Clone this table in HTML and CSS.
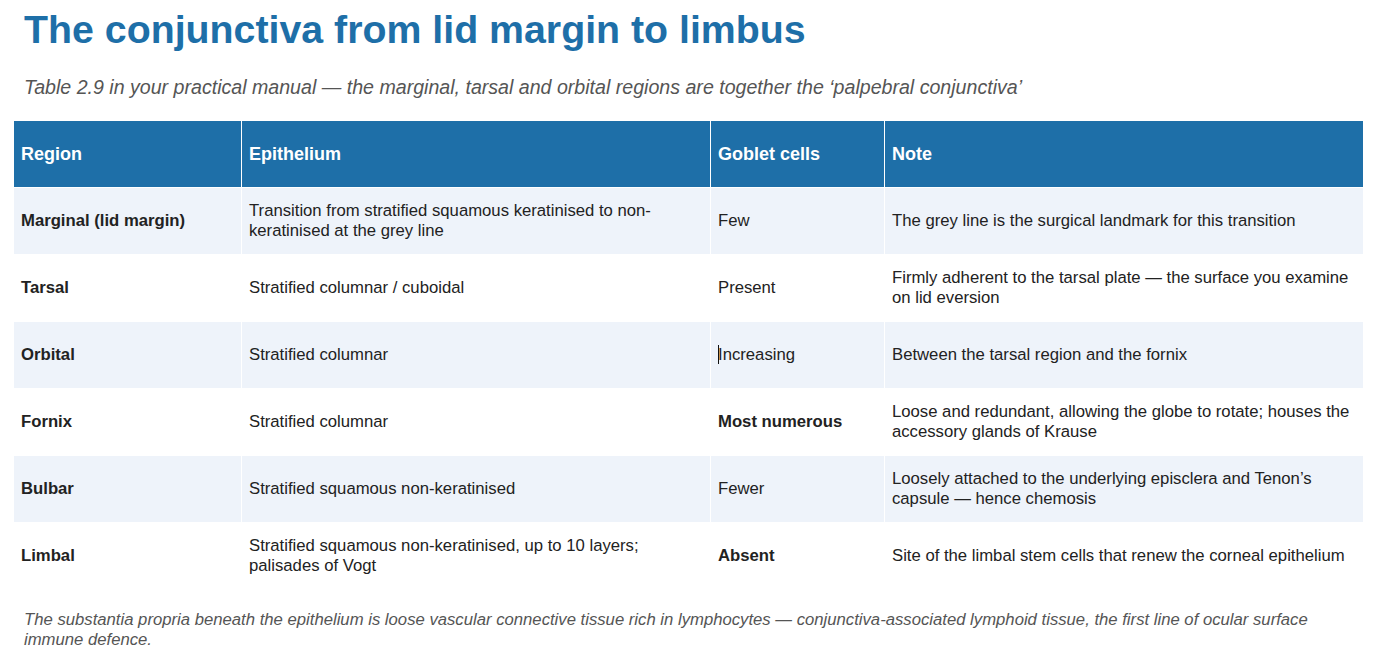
FILE: index.html
```html
<!DOCTYPE html>
<html lang="en">
<head>
<meta charset="utf-8">
<title>The conjunctiva from lid margin to limbus</title>
<link rel="stylesheet" href="styles.css">
</head>
<body>
<main class="page">
  <h1 class="title">The conjunctiva from lid margin to limbus</h1>
  <p class="subtitle">Table 2.9 in your practical manual — the marginal, tarsal and orbital regions are together the ‘palpebral conjunctiva’</p>
  <table class="regions">
    <thead>
      <tr>
        <th class="c1">Region</th>
        <th class="c2">Epithelium</th>
        <th class="c3">Goblet cells</th>
        <th class="c4">Note</th>
      </tr>
    </thead>
    <tbody>
      <tr class="alt">
        <td class="name">Marginal (lid margin)</td>
        <td>Transition from stratified squamous keratinised to non-keratinised at the grey line</td>
        <td>Few</td>
        <td>The grey line is the surgical landmark for this transition</td>
      </tr>
      <tr>
        <td class="name">Tarsal</td>
        <td>Stratified columnar / cuboidal</td>
        <td>Present</td>
        <td>Firmly adherent to the tarsal plate — the surface you examine on lid eversion</td>
      </tr>
      <tr class="alt">
        <td class="name">Orbital</td>
        <td>Stratified columnar</td>
        <td><span class="caret"></span>Increasing</td>
        <td>Between the tarsal region and the fornix</td>
      </tr>
      <tr>
        <td class="name">Fornix</td>
        <td>Stratified columnar</td>
        <td class="strong">Most numerous</td>
        <td>Loose and redundant, allowing the globe to rotate; houses the accessory glands of Krause</td>
      </tr>
      <tr class="alt">
        <td class="name">Bulbar</td>
        <td>Stratified squamous non-keratinised</td>
        <td>Fewer</td>
        <td>Loosely attached to the underlying episclera and Tenon’s capsule — hence chemosis</td>
      </tr>
      <tr>
        <td class="name">Limbal</td>
        <td>Stratified squamous non-keratinised, up to 10 layers; palisades of Vogt</td>
        <td class="strong">Absent</td>
        <td>Site of the limbal stem cells that renew the corneal epithelium</td>
      </tr>
    </tbody>
  </table>
  <p class="footnote">The substantia propria beneath the epithelium is loose vascular connective tissue rich in lymphocytes — conjunctiva-associated lymphoid tissue, the first line of ocular surface immune defence.</p>
</main>
</body>
</html>
```

FILE: styles.css
```css
html, body {
  margin: 0;
  padding: 0;
  background: #ffffff;
}
body {
  font-family: "Liberation Sans", Arial, sans-serif;
  color: #222222;
}
.page {
  padding: 0 16px 0 13px;
}
.title {
  margin: 0;
  padding: 6px 0 0 11px;
  font-size: 39.3px;
  line-height: 46px;
  font-weight: bold;
  color: #1e6fa8;
}
.subtitle {
  margin: 23px 0 0 0;
  padding-left: 11px;
  font-size: 19.6px;
  line-height: 24px;
  font-style: italic;
  color: #555555;
}
.regions {
  margin-top: 21px;
  width: 1351px;
  border-collapse: separate;
  border-spacing: 1px;
  table-layout: fixed;
  font-size: 16.7px;
  line-height: 20px;
}
.regions th,
.regions td {
  height: 66px;
  padding: 0 8px 0 7px;
  text-align: left;
  vertical-align: middle;
  box-sizing: border-box;
}
.regions th {
  background: #1e6fa8;
  color: #ffffff;
  font-weight: bold;
  font-size: 18px;
}
.c1 { width: 227px; }
.c2 { width: 468px; }
.c3 { width: 173px; }
.c4 { width: 478px; }
.regions td {
  background: #ffffff;
}
.regions tr.alt td {
  background: #eef3fa;
}
.regions td.name,
.regions td.strong {
  font-weight: bold;
}
.caret {
  display: inline-block;
  width: 1px;
  height: 19px;
  margin-right: -1px;
  background: #111111;
  vertical-align: -4px;
}
.footnote {
  margin: 20px 0 0 0;
  padding-left: 11px;
  font-size: 16.7px;
  line-height: 20px;
  font-style: italic;
  color: #555555;
}
```
